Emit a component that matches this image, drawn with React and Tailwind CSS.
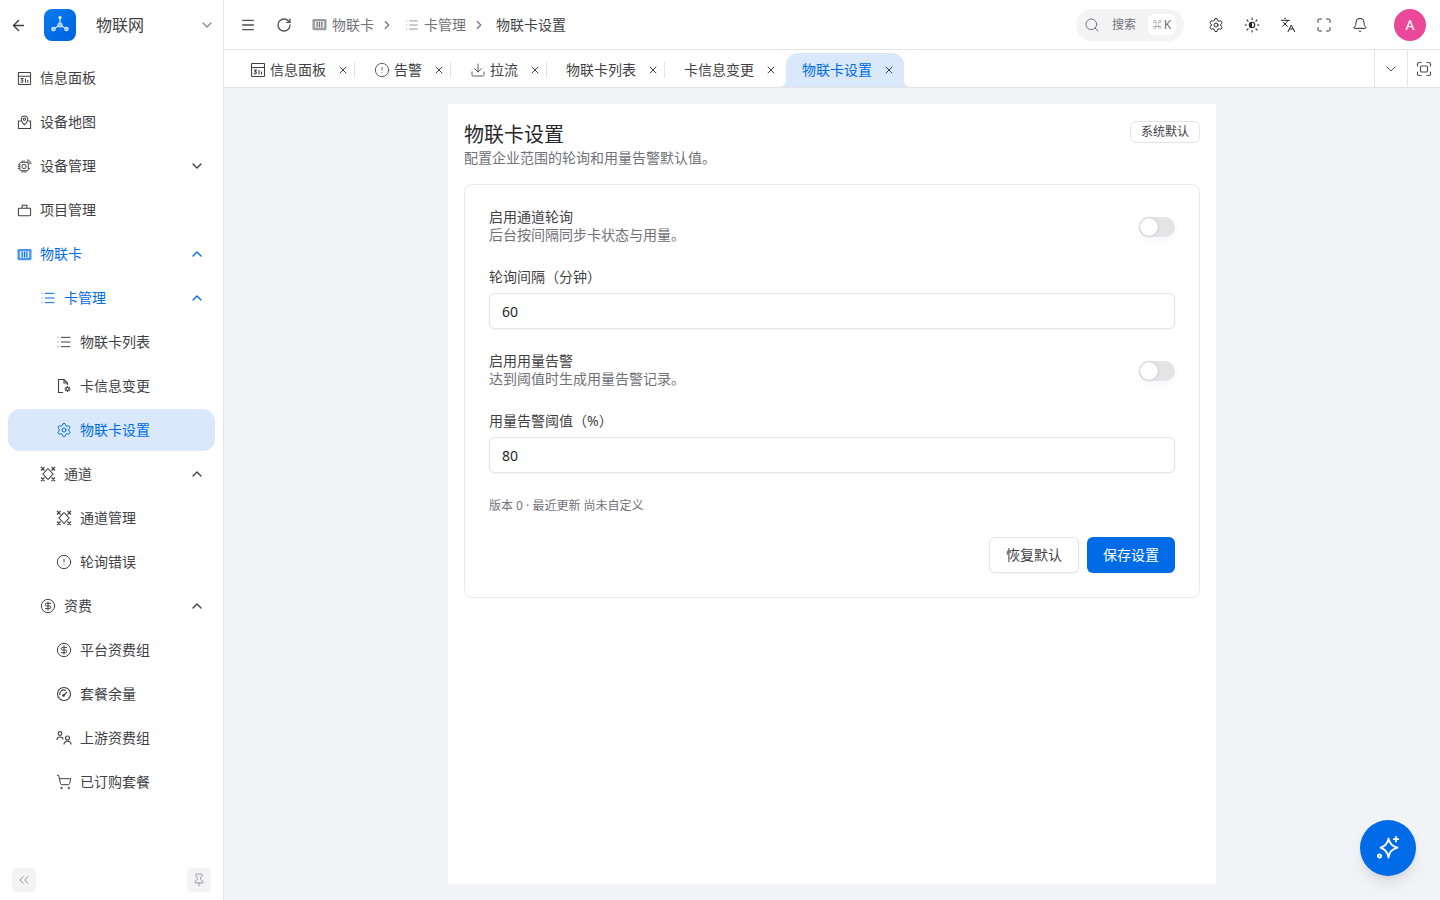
import {
  ArrowLeft, ChevronDown, ChevronUp, ChevronRight, List, Settings, CircleAlert, CircleDollarSign,
  ShoppingCart, ChevronsLeft, Pin, Menu, RotateCw, X, Download, Search, Languages,
  Maximize, Bell,
} from 'lucide-react';

const FONT = "font-['Noto_Sans','Noto_Sans_CJK_SC',sans-serif]";

const BlockIcon = ({ className }) => (
  <svg viewBox="0 0 16 16" fill="none" stroke="currentColor" strokeWidth="1.1" className={className}>
    <rect x="1.500" y="1.500" width="13" height="13" rx="0.6" />
    <path d="M1.500 5.500h13M3.800 8h2.500L5 9.600c1 0 1.400.5 1.400 1.200 0 .8-.7 1.200-1.400 1.200-.5 0-1-.2-1.300-.6M9 8v4.500M11.500 9.500v3" />
  </svg>
);

const MapIcon = ({ className }) => (
  <svg viewBox="0 0 16 16" fill="none" stroke="currentColor" strokeWidth="1.100" className={className}>
    <path d="M4 6.500H1.500v8h13v-8H12" />
    <path d="M8 1C6 1 4.500 2.500 4.500 4.500 4.500 7 8 10.500 8 10.500s3.500-3.500 3.500-6C11.500 2.500 10 1 8 1z" />
    <circle cx="8" cy="4.500" r="1.200" />
  </svg>
);

const ChipIcon = ({ className }) => (
  <svg viewBox="0 0 16 16" fill="none" stroke="currentColor" strokeWidth="1" className={className}>
    <rect x="3" y="3.500" width="9" height="9" rx="1.500" />
    <rect x="5.500" y="6" width="4" height="4" rx="0.8" />
    <path d="M5.500 1.500v2M7.500 1.500v2M5.500 12.500v2M7.500 12.500v2M9.500 12.500v2M1 6h2M1 8h2M1 10h2M12 10h2M10.500 1a4.500 4.500 0 0 1 4.500 4.500M10.500 2.800a2.700 2.700 0 0 1 2.700 2.700" />
  </svg>
);

const BagIcon = ({ className }) => (
  <svg viewBox="0 0 16 16" fill="none" stroke="currentColor" strokeWidth="1.100" className={className}>
    <rect x="1.500" y="5.500" width="13" height="8" rx="0.6" />
    <path d="M5.500 5.500v-3h5v3" />
  </svg>
);

const SimIcon = ({ className }) => (
  <svg viewBox="0 0 16 16" fill="none" className={className}>
    <rect x="0.500" y="2" width="15" height="12" rx="1.500" fill="currentColor" fillOpacity="0.7" />
    <rect x="3" y="4.500" width="10" height="7" rx="0.6" fill="#fff" fillOpacity="0.85" />
    <path d="M5.500 5v6M8 5v6M10.500 5v6" stroke="currentColor" strokeWidth="1.300" />
  </svg>
);

const ChannelIcon = ({ className }) => (
  <svg viewBox="0 0 16 16" fill="none" stroke="currentColor" strokeWidth="1.100" className={className}>
    <path d="M8 2.500L13 8l-5 5.500L3 8z" />
    <path d="M1 1l3.500 3.500M4.500 1L1 4.500M15 1l-3.500 3.500M11.500 1L15 4.500M1 15l3.500-3.500M4.500 15L1 11.500M15 15l-3.500-3.500M11.500 15l3.500-3.500" />
  </svg>
);

const FileGearIcon = ({ className }) => (
  <svg viewBox="0 0 16 16" fill="none" stroke="currentColor" strokeWidth="1.100" className={className}>
    <path d="M7 14.500H2.500v-13H8l3.500 3.500v2M8 1.500V5h3.500" />
    <circle cx="11.500" cy="11" r="1.500" />
    <path d="M11.500 8v1.300M11.500 12.700V14M8.500 11h1.300M13.200 11h1.300M9.400 8.900l.9.9M12.700 12.200l.9.900M13.600 8.900l-.9.900M10.300 12.200l-.9.900" />
  </svg>
);

const GaugeIcon = ({ className }) => (
  <svg viewBox="0 0 16 16" fill="none" stroke="currentColor" strokeWidth="1.100" className={className}>
    <circle cx="8" cy="8" r="6.500" />
    <path d="M3.800 9a4.200 4.200 0 0 1 6-4.600M7.500 9.500l3.500-3.500" />
    <circle cx="7.500" cy="9.500" r="0.8" fill="currentColor" />
  </svg>
);

const PeopleIcon = ({ className }) => (
  <svg viewBox="0 0 16 16" fill="none" stroke="currentColor" strokeWidth="1.100" className={className}>
    <circle cx="4" cy="3.500" r="1.900" />
    <path d="M1 10c0-2 1.200-3 3-3s3 1 3 2.200" />
    <circle cx="11.500" cy="8" r="2" />
    <path d="M8 14.500c0-2 1.400-3.200 3.500-3.200s3.500 1.200 3.500 3.200" />
  </svg>
);

const SunIcon = ({ className }) => (
  <svg viewBox="0 0 16 16" fill="none" stroke="currentColor" strokeWidth="1.100" strokeLinecap="round" className={className}>
    <circle cx="8" cy="8" r="2.700" />
    <path d="M8 5.300a2.700 2.700 0 0 0 0 5.400z" fill="currentColor" stroke="none" />
    <path d="M8 1v1.500M8 13.500V15M1 8h1.500M13.500 8H15M3 3l1.100 1.100M11.900 11.900L13 13M13 3l-1.100 1.100M4.100 11.900L3 13" />
  </svg>
);

const ScanBoxIcon = ({ className }) => (
  <svg viewBox="0 0 16 16" fill="none" stroke="currentColor" strokeWidth="1.200" strokeLinecap="round" className={className}>
    <path d="M1.500 5V3a1.500 1.500 0 0 1 1.500-1.500h2M11 1.500h2A1.500 1.500 0 0 1 14.500 3v2M14.500 11v2a1.500 1.500 0 0 1-1.500 1.500h-2M5 14.500H3A1.500 1.500 0 0 1 1.500 13v-2" />
    <rect x="4.500" y="5" width="7" height="6" rx="1" />
  </svg>
);

const MENU = [
  { label: '信息面板', icon: BlockIcon },
  { label: '设备地图', icon: MapIcon },
  { label: '设备管理', icon: ChipIcon, arrow: 'down' },
  { label: '项目管理', icon: BagIcon },
  { label: '物联卡', icon: SimIcon, arrow: 'up', open: true },
  { label: '卡管理', icon: List, arrow: 'up', open: true, level: 1 },
  { label: '物联卡列表', icon: List, level: 2 },
  { label: '卡信息变更', icon: FileGearIcon, level: 2 },
  { label: '物联卡设置', icon: Settings, level: 2, active: true },
  { label: '通道', icon: ChannelIcon, arrow: 'up', level: 1 },
  { label: '通道管理', icon: ChannelIcon, level: 2 },
  { label: '轮询错误', icon: CircleAlert, level: 2 },
  { label: '资费', icon: CircleDollarSign, arrow: 'up', level: 1 },
  { label: '平台资费组', icon: CircleDollarSign, level: 2 },
  { label: '套餐余量', icon: GaugeIcon, level: 2 },
  { label: '上游资费组', icon: PeopleIcon, level: 2 },
  { label: '已订购套餐', icon: ShoppingCart, level: 2 },
];

const TABS = [
  { label: '信息面板', icon: BlockIcon, w: 'w-[116px]', pad: 'pl-[11px]' },
  { label: '告警', icon: CircleAlert, w: 'w-[96px]', pad: 'pl-[19px]' },
  { label: '拉流', icon: Download, w: 'w-[96px]', pad: 'pl-[19px]' },
  { label: '物联卡列表', w: 'w-[118px]', pad: 'pl-[19px]' },
  { label: '卡信息变更', w: 'w-[118px]', pad: 'pl-[19px]', last: true },
  { label: '物联卡设置', w: 'w-[118px]', pad: 'pl-4', active: true },
];

function MenuRow({ item }) {
  const Icon = item.icon;
  const pad = item.level === 2 ? 'pl-[48px]' : item.level === 1 ? 'pl-[32px]' : 'pl-[9px]';
  const color = item.active || item.open ? 'text-[#006be6]' : 'text-[#3f3f46]';
  return (
    <div className={`mx-2 h-[42px] shrink-0 flex items-center rounded-xl pr-[10px] text-sm ${pad} ${color} ${item.active ? 'bg-[#d9e8fb]' : ''}`}>
      <Icon strokeWidth={1.5} className={item.level ? 'w-4 h-4' : 'w-[15px] h-[15px]'} />
      <span className="ml-2 flex-1">{item.label}</span>
      {item.arrow === 'up' && <ChevronUp className="w-4 h-4" />}
      {item.arrow === 'down' && <ChevronDown className="w-4 h-4" />}
    </div>
  );
}

function Sidebar() {
  return (
    <aside className="w-[224px] h-full shrink-0 bg-white border-r border-[#e4e4e7] flex flex-col">
      <div className="h-[50px] shrink-0 flex items-center pl-[10px] pr-[8px] text-[#3f3f46]">
        <ArrowLeft className="w-[17px] h-[17px]" />
        <div className="ml-[17px] w-8 h-8 rounded-lg bg-gradient-to-br from-[#0a7cf0] to-[#0060dd] flex items-center justify-center">
          <svg viewBox="0 0 20 20" className="w-5 h-5" fill="none" stroke="#cfe3fd" strokeWidth="1.200">
            <path d="M10 3v7M10 10l-6.500 4M10 10l6.500 4" />
            <circle cx="10" cy="2.500" r="1.500" fill="#fff" stroke="none" />
            <circle cx="10" cy="10" r="2" fill="#8fc0fb" />
            <circle cx="3.500" cy="14" r="1.700" fill="#8fc0fb" />
            <circle cx="16.500" cy="14" r="1.700" fill="#8fc0fb" />
          </svg>
        </div>
        <span className="ml-5 flex-1 text-base">物联网</span>
        <ChevronDown className="w-4 h-4 text-[#8a8a92]" />
      </div>
      <nav className="flex-1 flex flex-col gap-[2px] pt-[7px]">
        {MENU.map(item => <MenuRow key={item.label + (item.level || 0)} item={item} />)}
      </nav>
      <div className="h-[32px] shrink-0 flex items-start justify-between px-3 text-[#7c7c85]">
        <div className="w-6 h-6 rounded bg-[#f4f4f5] flex items-center justify-center">
          <ChevronsLeft className="w-4 h-4 stroke-[1.25]" />
        </div>
        <div className="w-6 h-6 rounded bg-[#f4f4f5] flex items-center justify-center">
          <Pin className="w-[14px] h-[14px] stroke-[1.25]" />
        </div>
      </div>
    </aside>
  );
}

function Header() {
  return (
    <header className="h-[50px] shrink-0 bg-white border-b border-[#e4e4e7] flex items-center pl-4 pr-[14px] text-[#3f3f46]">
      <Menu className="w-4 h-4 text-[#52525b]" />
      <RotateCw className="ml-5 w-4 h-4 text-[#52525b]" />
      <div className="ml-5 flex items-center text-sm text-[#71717a]">
        <SimIcon className="w-[15px] h-[15px]" />
        <span className="ml-[5px]">物联卡</span>
        <ChevronRight className="mx-[6px] w-[14px] h-[14px]" />
        <List className="ml-[5px] w-[14px] h-[14px] stroke-[1.25]" />
        <span className="ml-[5px]">卡管理</span>
        <ChevronRight className="mx-[6px] w-[14px] h-[14px]" />
        <span className="ml-1 text-[#3f3f46]">物联卡设置</span>
      </div>
      <div className="ml-auto w-[108px] h-8 rounded-full bg-[#f4f4f5] flex items-center pl-2 text-[#71717a]">
        <Search className="w-4 h-4 stroke-[1.5]" />
        <span className="ml-3 text-xs">搜索</span>
        <span className="ml-3 w-7 h-[21px] rounded-md bg-white flex items-center justify-center">
          <span className="text-[9px] font-bold">⌘</span>
          <span className="ml-[2px] text-xs">K</span>
        </span>
      </div>
      <div className="ml-6 flex items-center gap-5 text-[#27272a]">
        <Settings className="w-4 h-4 stroke-[1.5]" />
        <SunIcon className="w-4 h-4" />
        <Languages className="w-4 h-4 stroke-[1.5]" />
        <Maximize className="w-4 h-4 stroke-[1.5]" />
        <Bell className="w-4 h-4 stroke-[1.5]" />
      </div>
      <div className="ml-[26px] w-8 h-8 rounded-full bg-[#ec4899] text-white text-sm flex items-center justify-center">A</div>
    </header>
  );
}

function Tab({ tab }) {
  const Icon = tab.icon;
  return (
    <div className={`${tab.w} h-[34px] relative flex items-center shrink-0 text-sm ${tab.active ? 'ml-[3px] rounded-t-xl bg-[#d9e8fb] text-[#006be6]' : 'text-[#3f3f46]'}`}>
      {tab.active && <span className="absolute -left-[6px] bottom-0 w-[6px] h-[6px] bg-[radial-gradient(circle_at_0_0,transparent_5.500px,#d9e8fb_6px)]" />}
      {tab.active && <span className="absolute -right-[6px] bottom-0 w-[6px] h-[6px] bg-[radial-gradient(circle_at_100%_0,transparent_5.500px,#d9e8fb_6px)]" />}
      <div className={`flex-1 flex items-center ${tab.pad}`}>
        {Icon && <Icon strokeWidth={1.25} className="mr-1 w-4 h-4" />}
        <span>{tab.label}</span>
      </div>
      <X className={`w-3 h-3 text-[#3f3f46] ${tab.active ? 'mr-[9px]' : tab.last ? 'mr-[6px]' : 'mr-[5px]'}`} />
      {!tab.active && !tab.last && <div className="w-px h-4 bg-[#e4e4e7]" />}
    </div>
  );
}

function TabBar() {
  return (
    <div className="h-[38px] shrink-0 bg-white border-b border-[#e4e4e7] flex items-center">
      <div className="flex-1 h-full flex items-end pl-[15px]">
        {TABS.map(t => <Tab key={t.label} tab={t} />)}
      </div>
      <div className="w-[33px] h-full border-l border-[#e4e4e7] flex items-center justify-center text-[#52525b]">
        <ChevronDown className="w-4 h-4 stroke-[1.5]" />
      </div>
      <div className="w-[33px] h-full border-l border-[#e4e4e7] flex items-center justify-center text-[#52525b]">
        <ScanBoxIcon className="w-4 h-4" />
      </div>
    </div>
  );
}

function Toggle() {
  return (
    <div className="w-9 h-5 rounded-full bg-[#e4e4e7] shadow-[0_4px_8px_rgba(0,0,0,0.04)] flex items-center">
      <div className="w-[18px] h-[18px] ml-px rounded-full bg-white shadow-[0_0_2px_rgba(0,0,0,0.3)]" />
    </div>
  );
}

function ToggleRow({ title, desc, className }) {
  return (
    <div className={`flex items-center justify-between ${className}`}>
      <div className="pb-px">
        <div className="mb-px text-sm leading-[16px] text-[#3f3f46]">{title}</div>
        <div className="text-sm leading-[18px] text-[#71717a]">{desc}</div>
      </div>
      <Toggle />
    </div>
  );
}

function NumberField({ label, value }) {
  return (
    <div className="mt-6">
      <div className="text-sm leading-[16px] text-[#3f3f46]">{label}</div>
      <div className="mt-2 h-9 pt-[2px] rounded-md border border-[#e4e4e7] shadow-xs flex items-center px-3 text-sm text-[#27272a]">{value}</div>
    </div>
  );
}

function SettingsCard() {
  return (
    <div className="mt-[18px] rounded-lg border border-[#e9e9ec] px-6 pt-6 pb-6">
      <ToggleRow title="启用通道轮询" desc="后台按间隔同步卡状态与用量。" />
      <NumberField label="轮询间隔（分钟）" value="60" />
      <ToggleRow className="mt-6" title="启用用量告警" desc="达到阈值时生成用量告警记录。" />
      <NumberField label="用量告警阈值（%）" value="80" />
      <p className="mt-[25px] text-xs leading-4 text-[#71717a]">版本 0 · 最近更新 尚未自定义</p>
      <div className="mt-[23px] flex justify-end gap-2">
        <button className="w-[90px] h-9 rounded-md border border-[#e4e4e7] bg-white shadow-xs text-sm text-[#3f3f46]">恢复默认</button>
        <button className="w-[88px] h-9 rounded-md bg-[#006be6] shadow-xs text-sm text-white">保存设置</button>
      </div>
    </div>
  );
}

export default function App() {
  return (
    <div className={`${FONT} relative w-full h-[900px] overflow-hidden flex bg-[#f1f3f7]`}>
      <Sidebar />
      <main className="flex-1 min-w-0 flex flex-col">
        <Header />
        <TabBar />
        <div className="flex-1 pt-4 pb-4 flex justify-center">
          <section className="w-[768px] bg-white p-4">
            <div className="flex items-start justify-between">
              <div>
                <h1 className="text-xl leading-[30px] text-[#27272a]">物联卡设置</h1>
                <p className="text-sm leading-[16px] text-[#71717a]">配置企业范围的轮询和用量告警默认值。</p>
              </div>
              <span className="mt-px h-[22px] w-[70px] rounded-md border border-[#e4e4e7] flex items-center justify-center text-xs text-[#3f3f46]">系统默认</span>
            </div>
            <SettingsCard />
          </section>
        </div>
      </main>
      <button className="absolute right-6 bottom-6 w-14 h-14 rounded-full bg-[#006be6] shadow-lg flex items-center justify-center text-white">
        <svg viewBox="0 0 24 24" className="w-6 h-6" fill="none" stroke="currentColor" strokeWidth="1.800" strokeLinejoin="round" strokeLinecap="round">
          <path d="M12.500 2.500c.8 5 3 7.500 9 9.200-6 1.800-8.200 4.300-9 9.800-.8-5.500-2.800-8-8-9.800 5.200-1.700 7.200-4.200 8-9.200z" />
          <path d="M20 1v4.500M17.800 3.200h4.400" />
          <circle cx="3.500" cy="20" r="1.600" />
        </svg>
      </button>
    </div>
  );
}
